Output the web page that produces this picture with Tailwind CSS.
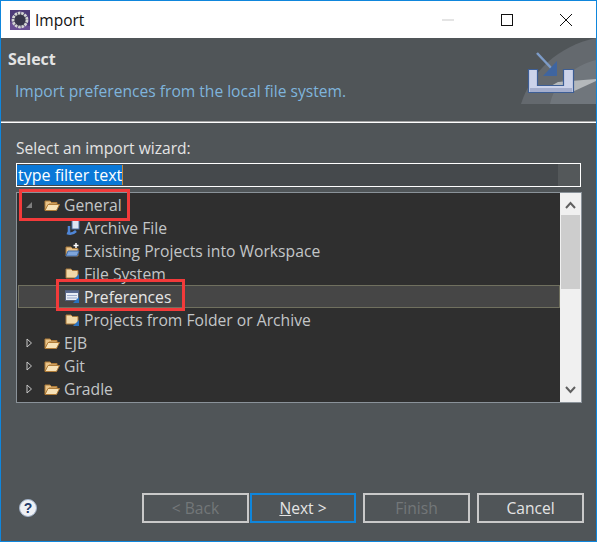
<!DOCTYPE html>
<html><head><meta charset="utf-8"><script src="https://cdn.jsdelivr.net/npm/@tailwindcss/browser@4"></script></head>
<body class="m-0">
<div class="relative w-[597px] h-[542px] overflow-hidden flex flex-col border border-[#0f86dc] bg-[#505558] font-['Open_Sans','Noto_Sans',sans-serif] text-[15.6px] leading-[20px] text-[#e4e4e4]">
  <!-- title bar -->
  <div class="h-[37px] shrink-0 bg-white flex items-center pl-[9px] text-black">
    <svg width="20" height="20" viewBox="0 0 20 20" class="shrink-0"><rect width="20" height="20" fill="#4d3a78"/><path d="M0 12 L20 16 V20 H0Z" fill="#6a4f94"/><circle cx="10" cy="10" r="7" fill="#38364a" stroke="#d4d4d4" stroke-width="2.800" stroke-dasharray="2.600 0.800"/></svg>
    <span class="ml-[5px] text-[15.5px] text-[#111]">Import</span>
    <div class="ml-auto flex items-center h-full">
      <svg width="14" height="14" viewBox="0 0 14 14" class="mr-[45px]"><path d="M1 7 H13" stroke="#c9c9c9" stroke-width="1"/></svg>
      <svg width="14" height="14" viewBox="0 0 14 14" class="mr-[45px]"><rect x="1.500" y="1.500" width="11" height="11" fill="none" stroke="#111" stroke-width="1"/></svg>
      <svg width="14" height="14" viewBox="0 0 14 14" class="mr-[23px]"><path d="M1 1 L13 13 M13 1 L1 13" stroke="#111" stroke-width="1"/></svg>
    </div>
  </div>
  <!-- header -->
  <div class="relative h-[83px] shrink-0 pl-[7px] pt-[11px]">
    <div class="font-bold text-[16px]">Select</div>
    <div class="mt-[12px] ml-[7px] text-[#7fb4dc]">Import preferences from the local file system.</div>
    <svg class="absolute right-0 top-0" width="76" height="66" viewBox="0 0 76 66">
      <path d="M1 66 C11 34 38 8 76 0 V66Z" fill="#64696e"/>
      <path d="M30 66 C34 46 52 28 76 22 V66Z" fill="#70767c"/>
      <path d="M18 55 H50 L76 43 V41 L38 44Z" fill="#b4b8bb"/>
      <path d="M8.500 31.500 H17.500 V47.500 H43.500 V31.500 H53.500 V54.500 H8.500Z" fill="#ccd3ea" stroke="#3d5e95" stroke-width="1.200"/>
      <path d="M10 50 H52 V54 H10Z" fill="#a4aecd"/>
      <path d="M17 15 L33 32" stroke="#7d9cc8" stroke-width="2.500"/>
      <path d="M37 23 V38 H23Z" fill="#3f65a0"/>
    </svg>
  </div>
  <!-- separators -->
  <div class="h-px shrink-0 bg-[#a5a5a5]"></div>
  <div class="h-px shrink-0 bg-white"></div>
  <!-- body -->
  <div class="flex-1 flex flex-col px-[15px] pt-[15px]">
    <div class="h-[20px]">Select an import wizard:</div>
    <div class="mt-[5px] h-[24px] w-[565px] border border-white bg-[#45494c] flex items-stretch">
      <span class="bg-[#0a78d7] text-white pl-[1px] my-px leading-[20px] text-[16px] border-r border-[#c98a3a]">type filter text</span>
      <div class="ml-auto w-[22px] bg-[#54585a]"></div>
    </div>
    <div class="mt-[5px] w-[566px] h-[211px] border border-[#8a9299] bg-[#2f2f2f] flex text-[15.7px]">
      <div class="flex-1 text-[#c3c6c8] overflow-hidden">
        <div class="h-[23px] flex items-center pl-[5px]">
          <svg width="10" height="10" viewBox="0 0 10 10" class="ml-[2px] mr-[10px]"><path d="M8 2 V8 H2Z" fill="#7f7f7f"/></svg>
          <svg width="16" height="14" viewBox="0 0 16 14" class="mr-[4px]"><path d="M1 12 V3 H6 L7.500 4.500 H13 V6 H5 Z" fill="#e9c48a" stroke="#b07c38"/><path d="M1 12.500 L4 6.500 H15.500 L12.500 12.500Z" fill="#f7e2b8" stroke="#b07c38"/></svg>
          <span>General</span>
        </div>
        <div class="h-[23px] flex items-center pl-[47px]">
          <svg width="18" height="18" viewBox="0 0 18 18" class="mr-[2px]"><rect x="8" y="1" width="7" height="9" fill="#dde4f2" stroke="#4f73ad"/><path d="M3 14 Q8 16 12 12 M5 7 V14" stroke="#4f86d6" stroke-width="2.500" fill="none"/></svg>
          <span>Archive File</span>
        </div>
        <div class="h-[23px] flex items-center pl-[47px]">
          <svg width="18" height="18" viewBox="0 0 18 18" class="mr-[2px]"><path d="M2 14 V5 H7 L8.500 6.500 H14 V14Z" fill="#e9c48a" stroke="#a8793a"/><path d="M2 14 L4 9 H15 L13 14Z" fill="#7fa6dc" stroke="#3f6aa8"/><path d="M12 1 V6 M9.500 3.500 H14.500" stroke="#fff" stroke-width="1.500"/></svg>
          <span>Existing Projects into Workspace</span>
        </div>
        <div class="h-[23px] flex items-center pl-[47px]">
          <svg width="18" height="18" viewBox="0 0 18 18" class="mr-[2px]"><path d="M2 13 V4 H7 L8.500 5.500 H14 V13Z" fill="#f1d9a8" stroke="#a8793a"/><path d="M9 15 L15 9 V15Z" fill="#2a72c0"/></svg>
          <span>File System</span>
        </div>
        <div class="h-[23px] flex items-center pl-[45px] ml-[1px] border border-[#70705f] bg-[#464646] text-[#e6e6e6]">
          <svg width="18" height="18" viewBox="0 0 18 18" class="mr-[2px]"><rect x="1.500" y="2.500" width="13" height="10" fill="#e8ecf5" stroke="#55607a"/><path d="M1.500 3 H14.500 V5 H1.500Z" fill="#5a6a90"/><path d="M3 7.500 H13 M3 10 H13" stroke="#9aa8c8"/><path d="M9 15 L15 9 V15Z" fill="#2a72c0"/></svg>
          <span>Preferences</span>
        </div>
        <div class="h-[23px] flex items-center pl-[47px]">
          <svg width="18" height="18" viewBox="0 0 18 18" class="mr-[2px]"><path d="M2 13 V4 H7 L8.500 5.500 H14 V13Z" fill="#f1d9a8" stroke="#a8793a"/><path d="M9 15 L15 9 V15Z" fill="#2a72c0"/></svg>
          <span>Projects from Folder or Archive</span>
        </div>
        <div class="h-[23px] flex items-center pl-[5px]">
          <svg width="10" height="10" viewBox="0 0 10 10" class="ml-[2px] mr-[10px]"><path d="M3 1 L7.500 5 L3 9Z" fill="#2f2f2f" stroke="#c9c9c9"/></svg>
          <svg width="16" height="14" viewBox="0 0 16 14" class="mr-[4px]"><path d="M1 12 V3 H6 L7.500 4.500 H13 V6 H5 Z" fill="#e9c48a" stroke="#b07c38"/><path d="M1 12.500 L4 6.500 H15.500 L12.500 12.500Z" fill="#f7e2b8" stroke="#b07c38"/></svg>
          <span>EJB</span>
        </div>
        <div class="h-[23px] flex items-center pl-[5px]">
          <svg width="10" height="10" viewBox="0 0 10 10" class="ml-[2px] mr-[10px]"><path d="M3 1 L7.500 5 L3 9Z" fill="#2f2f2f" stroke="#c9c9c9"/></svg>
          <svg width="16" height="14" viewBox="0 0 16 14" class="mr-[4px]"><path d="M1 12 V3 H6 L7.500 4.500 H13 V6 H5 Z" fill="#e9c48a" stroke="#b07c38"/><path d="M1 12.500 L4 6.500 H15.500 L12.500 12.500Z" fill="#f7e2b8" stroke="#b07c38"/></svg>
          <span>Git</span>
        </div>
        <div class="h-[23px] flex items-center pl-[5px]">
          <svg width="10" height="10" viewBox="0 0 10 10" class="ml-[2px] mr-[10px]"><path d="M3 1 L7.500 5 L3 9Z" fill="#2f2f2f" stroke="#c9c9c9"/></svg>
          <svg width="16" height="14" viewBox="0 0 16 14" class="mr-[4px]"><path d="M1 12 V3 H6 L7.500 4.500 H13 V6 H5 Z" fill="#e9c48a" stroke="#b07c38"/><path d="M1 12.500 L4 6.500 H15.500 L12.500 12.500Z" fill="#f7e2b8" stroke="#b07c38"/></svg>
          <span>Gradle</span>
        </div>
      </div>
      <!-- scrollbar -->
      <div class="w-[21px] shrink-0 bg-[#f0f0f0] flex flex-col items-center">
        <svg width="21" height="22" viewBox="0 0 21 22" class="shrink-0"><path d="M6 15 L10.500 10 L15 15" fill="none" stroke="#606060" stroke-width="2"/></svg>
        <div class="w-[19px] h-[74px] bg-[#cdcdcd]"></div>
        <svg width="21" height="22" viewBox="0 0 21 22" class="shrink-0 mt-auto"><path d="M6 7 L10.500 12 L15 7" fill="none" stroke="#606060" stroke-width="2"/></svg>
      </div>
    </div>
    <!-- footer -->
    <div class="mt-[90px] flex items-center w-[580px]">
      <svg width="18" height="18" viewBox="0 0 18 18" class="ml-[3px] shrink-0"><circle cx="9" cy="9" r="8.500" fill="#eef0f4" stroke="#9fb0c8"/><text x="9" y="14" text-anchor="middle" font-family="Liberation Sans" font-weight="bold" font-size="14" fill="#233a6a">?</text></svg>
      <button class="shrink-0 ml-[105px] w-[107px] h-[30px] border-2 border-[#c9c9c9] text-[#737779]">&lt; Back</button>
      <button class="shrink-0 ml-px w-[106px] h-[30px] border-2 border-[#0f86dc] text-[#e4e4e4]"><span class="underline">N</span>ext &gt;</button>
      <button class="shrink-0 ml-[7px] w-[107px] h-[30px] border-2 border-[#c9c9c9] text-[#737779]">Finish</button>
      <button class="shrink-0 ml-[7px] w-[107px] h-[30px] border-2 border-[#c9c9c9] text-[#e4e4e4]">Cancel</button>
    </div>
  </div>
  <!-- annotations -->
  <div class="absolute left-[18px] top-[188px] w-[111px] h-[32px] border-[3px] border-[#f23a3a]"></div>
  <div class="absolute left-[55px] top-[278px] w-[129px] h-[32px] border-[3px] border-[#f23a3a]"></div>
</div>
</body></html>
